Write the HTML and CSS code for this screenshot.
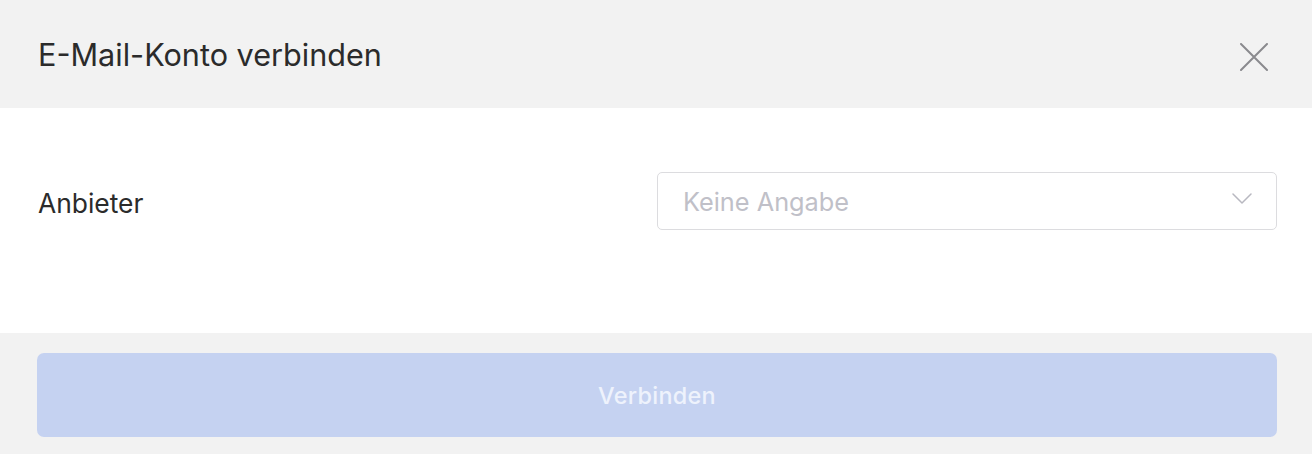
FILE: index.html
```html
<!DOCTYPE html>
<html lang="de">
<head>
<meta charset="utf-8">
<title>E-Mail-Konto verbinden</title>
<link rel="stylesheet" href="styles.css">
</head>
<body>
<div class="dialog">
  <header class="dialog-header">
    <h1 class="dialog-title">E-Mail-Konto verbinden</h1>
    <button class="close-btn" aria-label="Schließen">
      <svg width="28" height="28" viewBox="0 0 28 28"><path d="M1 1 L27 27 M27 1 L1 27" stroke="#8a8a8e" stroke-width="2" stroke-linecap="round" fill="none"/></svg>
    </button>
  </header>
  <div class="dialog-body">
    <div class="field-row">
      <label class="field-label">Anbieter</label>
      <div class="select">
        <span class="select-placeholder">Keine Angabe</span>
        <svg class="chevron" width="20" height="12" viewBox="0 0 20 12"><path d="M1 1 L10 10 L19 1" stroke="#b8b8c0" stroke-width="1.5" fill="none" stroke-linecap="round" stroke-linejoin="round"/></svg>
      </div>
    </div>
  </div>
  <footer class="dialog-footer">
    <button class="primary-btn" disabled>Verbinden</button>
  </footer>
</div>
</body>
</html>
```
FILE: styles.css
```css
html, body {
  margin: 0;
  padding: 0;
  background: #ffffff;
}
body {
  font-family: Inter, "Liberation Sans", sans-serif;
  color: #2b2b2b;
}
.dialog {
  width: 1312px;
  display: flex;
  flex-direction: column;
}
.dialog-header {
  height: 108px;
  box-sizing: border-box;
  background: #f2f2f2;
  display: flex;
  align-items: center;
  justify-content: space-between;
  padding: 0 44px 0 38px;
}
.dialog-title {
  margin: 0;
  font-size: 30.6px;
  font-weight: 400;
  color: #2b2b2b;
  letter-spacing: 0;
}
.close-btn {
  border: 0;
  background: transparent;
  padding: 0;
  width: 28px;
  height: 28px;
  display: flex;
  margin-top: 6px;
}
.dialog-body {
  padding: 64px 35px 103px 37px;
  background: #ffffff;
}
.field-row {
  display: grid;
  grid-template-columns: 1fr 1fr;
  align-items: center;
}
.field-label {
  font-size: 26.4px;
  color: #2b2b2b;
  padding-left: 1px;
  margin-top: 4px;
}
.select {
  height: 58px;
  box-sizing: border-box;
  border: 1.5px solid #dcdcdf;
  border-radius: 5px;
  display: flex;
  align-items: center;
  justify-content: space-between;
  padding: 0 24px 0 25px;
}
.select-placeholder {
  font-size: 25.3px;
  color: #c0c0c8;
}
.chevron {
  margin-top: -4px;
}
.dialog-footer {
  background: #f2f2f2;
  padding: 20px 35px 17px 37px;
}
.primary-btn {
  width: 100%;
  height: 84px;
  border: 0;
  border-radius: 7px;
  background: #c5d2f1;
  color: #eef2fc;
  font-family: Inter, "Liberation Sans", sans-serif;
  font-size: 23.4px;
  font-weight: 500;
  letter-spacing: 0.3px;
  cursor: default;
}
```
